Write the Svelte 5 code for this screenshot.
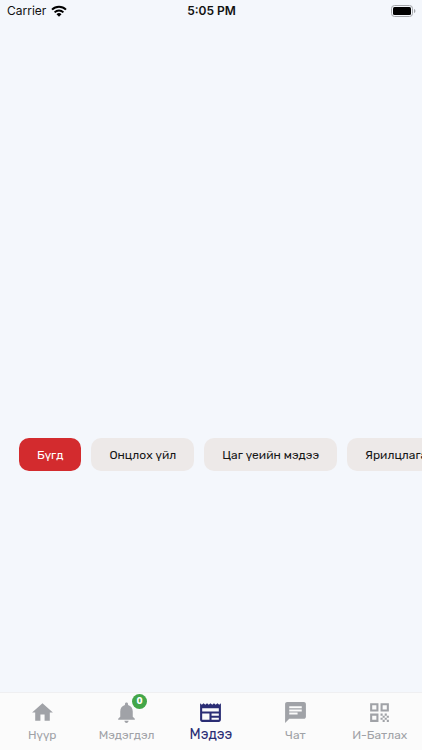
<script>
  const categories = ['Бүгд', 'Онцлох үйл', 'Цаг үеийн мэдээ', 'Ярилцлага'];

  const tabs = [
    {
      id: 'home',
      label: 'Нүүр',
      icon: 'M10 20v-6h4v6h5v-8h3L12 3 2 12h3v8z'
    },
    {
      id: 'notifications',
      label: 'Мэдэгдэл',
      badge: 0,
      icon: 'M12 22c1.1 0 2-.9 2-2h-4c0 1.1.89 2 2 2zm6-6v-5c0-3.07-1.64-5.64-4.5-6.32V4c0-.83-.67-1.5-1.5-1.5s-1.5.67-1.5 1.5v.68C7.63 5.36 6 7.92 6 11v5l-2 2v1h16v-1l-2-2z'
    },
    {
      id: 'news',
      label: 'Мэдээ',
      icon: 'M22 3l-1.67 1.67L18.67 3 17 4.67 15.33 3l-1.66 1.67L12 3l-1.67 1.67L8.67 3 7 4.67 5.33 3 3.67 4.67 2 3v16c0 1.1.9 2 2 2h16c1.1 0 2-.9 2-2V3zM11 19H4v-6h7v6zm9 0h-7v-2h7v2zm0-4h-7v-2h7v2zm0-4H4V8h16v3z'
    },
    {
      id: 'chat',
      label: 'Чат',
      icon: 'M20 2H4c-1.1 0-1.99.9-1.99 2L2 22l4-4h14c1.1 0 2-.9 2-2V4c0-1.1-.9-2-2-2zM6 9h12v2H6V9zm8 5H6v-2h8v2zm4-6H6V6h12v2z'
    },
    {
      id: 'verify',
      label: 'И-Батлах',
      icon: 'M3 11h8V3H3v8zm2-6h4v4H5V5zM3 21h8v-8H3v8zm2-6h4v4H5v-4zM13 3v8h8V3h-8zm6 6h-4V5h4v4zM19 19h2v2h-2zM13 13h2v2h-2zM15 15h2v2h-2zM13 17h2v2h-2zM15 19h2v2h-2zM17 17h2v2h-2zM17 13h2v2h-2zM19 15h2v2h-2z'
    }
  ];

  let category = $state('Бүгд');
  let activeTab = $state('news');
</script>

<div class="screen">
  <header class="status">
    <div class="carrier">
      <span>Carrier</span>
      <svg class="wifi" viewBox="0 0 16 12" aria-hidden="true">
        <path d="M1 4.6a10 10 0 0 1 14 0" />
        <path d="M3.6 7.4a6.3 6.3 0 0 1 8.8 0" />
        <path class="dot" d="M8 11.8 5.5 9.3a3.5 3.5 0 0 1 5 0z" />
      </svg>
    </div>
    <time>5:05 PM</time>
    <svg class="battery" viewBox="0 0 25 12" aria-hidden="true">
      <rect class="case" x="0.5" y="0.5" width="21" height="11" rx="3" />
      <rect x="2" y="2" width="18" height="8" rx="1.5" />
      <path class="cap" d="M23 4c1 .3 1.4 1 1.4 2s-.4 1.7-1.4 2z" />
    </svg>
  </header>

  <main>
    <div class="chips">
      {#each categories as name (name)}
        <button class="chip" class:selected={category === name} onclick={() => (category = name)}>
          {name}
        </button>
      {/each}
    </div>
  </main>

  <nav class="tabbar">
    {#each tabs as tab (tab.id)}
      <button class="tab" class:active={activeTab === tab.id} onclick={() => (activeTab = tab.id)}>
        <span class="icon">
          <svg viewBox="0 0 24 24" aria-hidden="true"><path d={tab.icon} /></svg>
          {#if tab.badge !== undefined}
            <span class="badge">{tab.badge}</span>
          {/if}
        </span>
        <span class="label">{tab.label}</span>
      </button>
    {/each}
  </nav>
</div>

<style>
  :global(body) { background: #f4f7fc; }

  .screen {
    display: flex;
    flex-direction: column;
    min-height: 100vh;
    overflow: hidden;
    font-family: Rubik, Roboto, "Noto Sans", sans-serif;
  }

  button { border: 0; margin: 0; font-family: inherit; font-weight: 400; cursor: pointer; }

  .status {
    display: grid;
    grid-template-columns: 1fr auto 1fr;
    align-items: center;
    height: 22px;
    padding: 0 6px 0 7px;
    font: 12px/20px Inter, sans-serif;
    color: #111;
  }
  .carrier { display: flex; align-items: center; gap: 5px; }
  time { font-weight: 600; }
  .wifi { width: 16px; height: 12px; fill: none; stroke: #000; stroke-width: 2; }
  .wifi .dot { fill: #000; stroke: none; }
  .battery { width: 25px; height: 12px; justify-self: end; }
  .battery .case { fill: none; stroke: #a4a6aa; }
  .battery .cap { fill: #a4a6aa; }

  main {
    flex: 1;
    display: grid;
    grid-template-rows: 32fr auto 17fr;
    grid-template-columns: minmax(0, 1fr);
  }
  .chips {
    grid-row: 2;
    display: flex;
    gap: 10px;
    padding: 0 19px;
    overflow-x: auto;
    scrollbar-width: none;
  }
  .chip {
    flex: none;
    height: 33px;
    padding: 0 18px;
    border-radius: 10px;
    background: #ede9e8;
    color: #161616;
    font-size: 12px;
  }
  .chip.selected { background: #d32b2e; color: #fff; }

  .tabbar {
    display: grid;
    grid-template-columns: repeat(5, 1fr);
    height: 58px;
    box-sizing: border-box;
    border-top: 1px solid #efeff1;
    background: #fbfbfb;
  }
  .tab {
    display: flex;
    flex-direction: column;
    align-items: center;
    padding: 7px 0 0;
    background: none;
    color: #a0a2a7;
    font-size: 12px;
    line-height: 20px;
  }
  .tab.active { color: #2a2d74; font-size: 14px; }
  .icon { position: relative; height: 25px; }
  .icon svg { display: block; width: 25px; height: 25px; fill: currentColor; }
  .badge {
    position: absolute;
    top: -6px;
    left: 18px;
    width: 15px;
    height: 15px;
    border-radius: 50%;
    background: #43a648;
    color: #fff;
    font-size: 9px;
    font-weight: 700;
    line-height: 15px;
    text-align: center;
  }
</style>
